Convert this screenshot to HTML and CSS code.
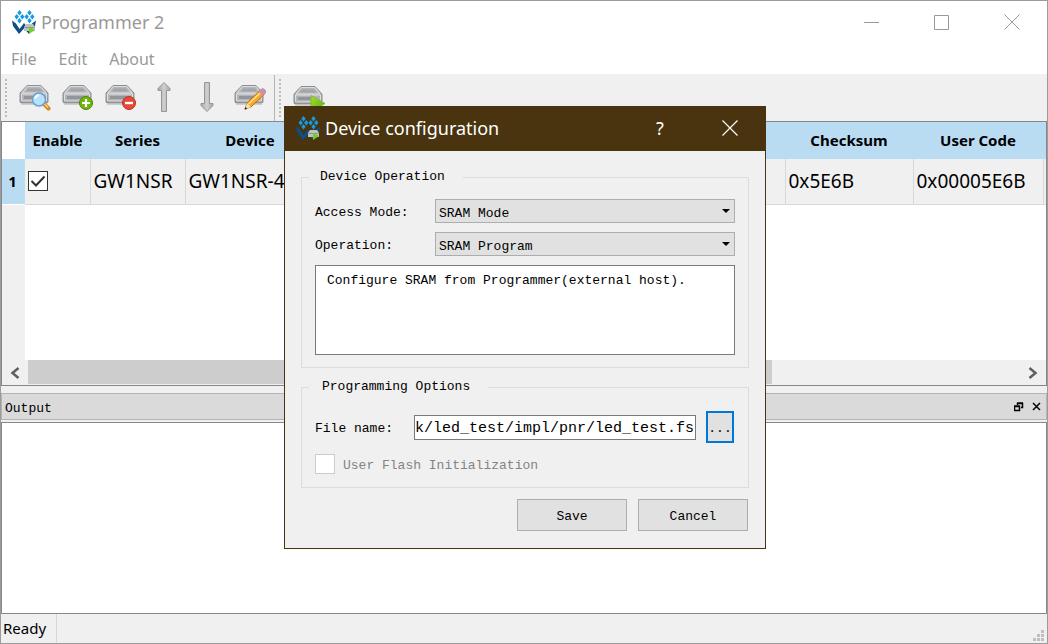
FILE: index.html
```html
<!DOCTYPE html>
<html lang="en">
<head>
<meta charset="utf-8">
<title>Programmer 2</title>
<link rel="stylesheet" href="styles.css">
</head>
<body>
<svg class="defs" aria-hidden="true">
  <defs>
    <linearGradient id="steel" x1="0" y1="0" x2="0" y2="1"><stop offset="0" stop-color="#d2d3d6"/><stop offset="1" stop-color="#8f9195"/></linearGradient>
    <linearGradient id="arrowFill" x1="0" y1="0" x2="1" y2="0"><stop offset="0" stop-color="#a2a2a2"/><stop offset=".5" stop-color="#d0d0d0"/><stop offset="1" stop-color="#a8a8a8"/></linearGradient>
    <linearGradient id="lime" x1="0" y1="0" x2="1" y2="1"><stop offset="0" stop-color="#a4e02c"/><stop offset="1" stop-color="#57ad12"/></linearGradient>
    <symbol id="drive" viewBox="0 0 32 28">
      <path d="M8 2.500h14l7 7.500v8.500q0 1.500-1.500 1.500H2.500q-1.500 0-1.500-1.500V10z" fill="url(#steel)" stroke="#8d8e91"/>
      <path d="M8.500 3.500h13l5.500 6.500H3z" fill="#b4b6b9" stroke="#dcddde"/>
      <path d="M9 5.500h12l2 3H7z" fill="#a3a5a9"/>
      <path d="M2.500 11h25v7h-25z" fill="#b2b4b8" stroke="#dedfe1"/>
      <path d="M5 13h17v3H5z" fill="#92959a"/>
      <path d="M2 21.500h26" stroke="#cfcfcf"/>
    </symbol>
    <symbol id="logo" viewBox="0 0 24 24">
      <path d="M0 10.500l4 3 3.500 5.500L12 13l4.500 6L20 13.500l4-3-1 5.500-6 8-5-5.500L7 24l-6-8z" fill="#0b4f86"/>
      <g fill="#159be6"><path d="M7.500 0l2.200 2.800-2.200 2.800-2.200-2.800zM4.700 4l2.200 2.800-2.200 2.800-2.200-2.800zM10.300 4l2.200 2.800-2.200 2.800-2.200-2.800zM7.500 8l2.200 2.800-2.200 2.800-2.200-2.800zM17.500 0l2.200 2.800-2.200 2.800-2.200-2.800zM14.700 4l2.200 2.800-2.200 2.800-2.200-2.800zM20.300 4l2.200 2.800-2.200 2.800-2.200-2.800zM17.500 8l2.200 2.800-2.200 2.800-2.200-2.800z"/></g>
      <path d="M14 14h7l2 3v4H12v-4z" fill="#bfc2c5"/><path d="M12.500 17.500h10" stroke="#8e9296"/>
      <path d="M17 16.500l6 3.500-6 4z" fill="#74cf25"/>
    </symbol>
    <symbol id="shaft" viewBox="0 0 14 32">
      <path d="M7 1.500l6 6v2H9.500v21h-5v-21H1v-2z" fill="url(#arrowFill)" stroke="#969696"/>
    </symbol>
  </defs>
</svg>

<main class="window">
  <header class="titlebar">
    <svg class="logo" aria-hidden="true"><use href="#logo"/></svg>
    <h1 class="title">Programmer 2</h1>
    <div class="controls">
      <button class="control" aria-label="Minimize"><svg viewBox="0 0 16 16"><path d="M0 8.500h15"/></svg></button>
      <button class="control" aria-label="Maximize"><svg viewBox="0 0 16 16"><path d="M.5 1.500h14v14h-14z"/></svg></button>
      <button class="control" aria-label="Close"><svg viewBox="0 0 16 16"><path d="M.5.5l15 15M15.500.5l-15 15"/></svg></button>
    </div>
  </header>

  <nav class="menubar">
    <button class="menu">File</button>
    <button class="menu">Edit</button>
    <button class="menu">About</button>
  </nav>

  <div class="toolbar" role="toolbar">
    <span class="grip"></span>
    <div class="tools">
      <button class="tool" aria-label="Scan device"><svg viewBox="0 0 32 28"><use href="#drive" width="32" height="28"/><path d="M25 21l4.500 4.500" stroke="#d58a20" stroke-width="4" stroke-linecap="round"/><path d="M25 20.500l4 4" stroke="#ffd080" stroke-width="1.500"/><circle cx="20" cy="16.500" r="6.500" fill="#b5e2fb" stroke="#6b9fce" stroke-width="1.500"/><path d="M16 15.500q1-3 4-3.500" fill="none" stroke="#fff" stroke-width="2"/></svg></button>
      <button class="tool" aria-label="Add device"><svg viewBox="0 0 32 28"><use href="#drive" width="32" height="28"/><circle cx="24" cy="20" r="6.500" fill="#70b50b" stroke="#4d8507"/><path d="M24 16v8M20 20h8" stroke="#fff" stroke-width="2.200"/></svg></button>
      <button class="tool" aria-label="Remove device"><svg viewBox="0 0 32 28"><use href="#drive" width="32" height="28"/><circle cx="24" cy="20" r="6.500" fill="#e5493a" stroke="#bb3026"/><path d="M20 20h8" stroke="#fff" stroke-width="2.400"/></svg></button>
      <button class="tool" aria-label="Move up"><svg class="arrow"><use href="#shaft"/></svg></button>
      <button class="tool" aria-label="Move down"><svg class="arrow down"><use href="#shaft"/></svg></button>
      <button class="tool" aria-label="Edit device"><svg viewBox="0 0 32 28"><use href="#drive" width="32" height="28"/><path d="M11 26l2-6L26 7.500l4 4L17 24z" fill="#f9a727" stroke="#bd6c12"/><path d="M14.500 21L27 9" stroke="#ffe29a" stroke-width="1.500"/><path d="M25 8.500l2.500-2.500q2-1 3.500 1t0 3.500L29 12.500z" fill="#d989b8" stroke="#a99"/><path d="M13 20l4 4-6 2.500z" fill="#f6deb4"/><path d="M10.500 26.800l1-2.800 1.800 1.700z" fill="#222"/></svg></button>
    </div>
    <span class="grip"></span>
    <button class="tool run" aria-label="Program"><svg viewBox="0 0 32 28"><use href="#drive" width="32" height="28"/><path d="M18 11.500l14 8-14 8z" fill="url(#lime)" stroke="#7fbf30"/></svg></button>
  </div>

  <section class="devices">
    <table class="grid">
      <colgroup><col class="c-num"><col class="c-enable"><col class="c-series"><col class="c-device"><col><col class="c-sum"><col class="c-code"><col class="c-end"></colgroup>
      <thead>
        <tr><td class="corner"></td><th>Enable</th><th>Series</th><th>Device</th><th></th><th>Checksum</th><th>User Code</th><th></th></tr>
      </thead>
      <tbody>
        <tr><th class="num">1</th><td><label class="enable"><input type="checkbox" checked aria-label="Enable device 1"><svg viewBox="0 0 20 20"><path d="M3.500 10l4.500 4.500 8.500-9"/></svg></label></td><td>GW1NSR</td><td>GW1NSR-4C</td><td></td><td>0x5E6B</td><td>0x00005E6B</td><td></td></tr>
      </tbody>
    </table>
    <div class="blank"></div>
    <div class="scrollbar">
      <button class="scroll" aria-label="Scroll left"><svg viewBox="0 0 10 12"><path d="M8.500 1l-6 5 6 5"/></svg></button>
      <div class="track"><div class="thumb"></div></div>
      <button class="scroll" aria-label="Scroll right"><svg viewBox="0 0 10 12"><path d="M1.500 1l6 5-6 5"/></svg></button>
    </div>
  </section>

  <header class="dock">
    <h2 class="dock-title">Output</h2>
    <button class="dock-button" aria-label="Float"><svg viewBox="0 0 10 10"><path d="M3.500 3V1.500h5v4H7M3 1h6M.5 4.500h5v4h-5zM0 4h6"/></svg></button>
    <button class="dock-button" aria-label="Close output"><svg viewBox="0 0 10 10"><path d="M1 1l7 7M8 1L1 8"/></svg></button>
  </header>
  <section class="output" aria-label="Output"></section>

  <footer class="status">
    <span class="ready">Ready</span>
    <svg class="sizegrip" viewBox="0 0 12 12"><path d="M8 0h3v3H8zM4 4h3v3H4zM8 4h3v3H8zM0 8h3v3H0zM4 8h3v3H4zM8 8h3v3H8z"/></svg>
  </footer>
</main>

<div class="dialog" role="dialog" aria-labelledby="dialog-title">
  <header class="dialog-bar">
    <svg class="logo" aria-hidden="true"><use href="#logo"/></svg>
    <h2 class="dialog-title" id="dialog-title">Device configuration</h2>
    <button class="dialog-control help" aria-label="Help">?</button>
    <button class="dialog-control" aria-label="Close dialog"><svg viewBox="0 0 16 16"><path d="M.5.5l15 15M15.500.5l-15 15"/></svg></button>
  </header>
  <form class="dialog-body">
    <fieldset class="group">
      <legend class="legend">Device Operation</legend>
      <div class="fields">
        <label class="label" for="mode">Access Mode:</label>
        <span class="combo"><select id="mode"><option>SRAM Mode</option></select><svg viewBox="0 0 8 4"><path d="M0 0h8L4 4z"/></svg></span>
        <label class="label" for="operation">Operation:</label>
        <span class="combo"><select id="operation"><option>SRAM Program</option></select><svg viewBox="0 0 8 4"><path d="M0 0h8L4 4z"/></svg></span>
        <textarea class="description" aria-label="Description" readonly>Configure SRAM from Programmer(external host).</textarea>
      </div>
    </fieldset>
    <fieldset class="group options">
      <legend class="legend">Programming Options</legend>
      <div class="file-row">
        <label class="label" for="file">File name:</label>
        <input class="file" id="file" type="text" value="k/led_test/impl/pnr/led_test.fs">
        <button class="browse" type="button">...</button>
      </div>
      <div class="flash"><input id="flash" type="checkbox" disabled><label class="label" for="flash">User Flash Initialization</label></div>
    </fieldset>
    <div class="actions">
      <button class="action" type="button">Save</button>
      <button class="action" type="button">Cancel</button>
    </div>
  </form>
</div>
</body>
</html>
```
FILE: styles.css
```css
* { box-sizing: border-box; }
body {
  margin: 0;
  font-family: "Noto Sans", "Open Sans", sans-serif;
  color: #000;
}
button, input, select, textarea { font: inherit; color: inherit; margin: 0; border-radius: 0; }
button { border: 0; padding: 0; background: none; }
h1, h2 { margin: 0; font-weight: 400; }
svg { display: block; flex: none; }
.defs { position: absolute; width: 0; height: 0; }

.window {
  display: grid;
  grid-template-rows: 44px 30px 46px minmax(0, 265fr) 34px 2px minmax(0, 192fr) 29px;
  height: 100vh;
  border: 1px solid #9b9b9b;
  background: #f0f0f0;
}

/* Title and menu */
.titlebar { display: flex; align-items: center; padding: 0 0 2px 11px; background: #fff; }
.logo { width: 24px; height: 24px; }
.title { margin-left: 5px; font-size: 18px; color: #999; }
.controls { display: flex; margin-left: auto; }
.control { display: grid; place-items: center; width: 70px; height: 42px; }
.control svg { width: 16px; height: 16px; fill: none; stroke: #999; }
.menubar { display: flex; gap: 22px; align-items: center; padding: 0 0 1px 10px; background: #fff; border-bottom: 1px solid #f0f0f0; }
.menu { font-size: 16px; color: #999; }

/* Toolbar */
.toolbar { display: flex; align-items: center; }
.grip {
  width: 2px;
  height: 38px;
  margin-left: 4px;
  background: repeating-linear-gradient(#bbb 0 2px, transparent 2px 4px);
}
.tools { display: flex; gap: 11px; height: 46px; align-items: center; padding: 0 8px 2px 12px; border-right: 1px solid #b4b4b4; }
.tool { display: grid; place-items: center; width: 32px; height: 32px; }
.tool svg { width: 32px; height: 28px; }
.tool .arrow { width: 14px; height: 32px; }
.down { transform: rotate(180deg); }
.run { margin-left: 12px; }

/* Device table */
.devices { display: flex; flex-direction: column; border: 1px solid #828790; background: #fff; }
.grid { width: 100%; table-layout: fixed; border-collapse: collapse; font-size: 19px; }
.c-num { width: 23px; }
.c-enable { width: 65px; }
.c-series { width: 95px; }
.c-device { width: 130px; }
.c-sum { width: 128px; }
.c-code { width: 130px; }
.c-end { width: 3px; }
.grid th { height: 37px; padding: 0 0 2px; background: #badcf3; font-size: 15px; font-weight: 700; }
.grid .corner { background: #fff; border: 0; }
.grid .num { padding-right: 2px; }
.grid tbody td { height: 45px; padding: 0 3px; background: #f0f0f0; border-right: 1px solid #d8d8d8; border-bottom: 1px solid #d8d8d8; white-space: nowrap; overflow: hidden; }
.grid tbody td:last-child { border-right: 0; }
.enable { display: grid; width: 20px; height: 20px; }
.enable input, .enable svg { grid-area: 1 / 1; width: 20px; height: 20px; }
.enable input { appearance: none; border: 1px solid #333; background: #fff; }
.enable svg { fill: none; stroke: #333; stroke-width: 2; pointer-events: none; z-index: 1; }
.blank { flex: 1; border-left: 23px solid #f0f0f0; }
.scrollbar { display: flex; height: 25px; background: #f0f0f0; }
.scroll { display: grid; place-items: center; width: 26px; }
.scroll svg { width: 10px; height: 12px; fill: none; stroke: #606060; stroke-width: 2.500; }
.track { flex: 1; padding-bottom: 1px; }
.thumb { width: 75%; height: 100%; background: #cdcdcd; }

/* Output dock */
.dock {
  display: flex;
  align-items: center;
  gap: 8px;
  margin-top: 7px;
  padding: 0 4px 0 3px;
  border: 1px solid #b4b4b4;
  background: #dadada;
}
.dock-title { flex: 1; padding-top: 4px; font: 13px/20px "Liberation Mono", monospace; }
.dock-button svg { width: 10px; height: 10px; fill: none; stroke: #000; stroke-width: 1.500; }
.output { grid-row: 7; border: 1px solid #828790; background: #fff; }
.status { grid-row: 8; display: flex; font-size: 15px; line-height: 29px; }
.ready { padding: 0 10px 0 2px; border-right: 1px solid #d8d8d8; }
.sizegrip { width: 12px; height: 12px; margin: auto 2px 1px auto; fill: #bfbfbf; }

/* Device configuration dialog */
.dialog {
  position: absolute;
  top: 106px;
  left: 284px;
  width: 482px;
  border: 1px solid #49340f;
  background: #f0f0f0;
  font: 13px/20px "Liberation Mono", monospace;
}
.dialog-bar { display: flex; align-items: center; height: 44px; padding: 0 0 2px 11px; background: #49340f; color: #fff; font-family: "Noto Sans", sans-serif; }
.dialog-title { flex: 1; margin-left: 5px; font-size: 18px; }
.dialog-control { display: grid; place-items: center; width: 70px; height: 42px; }
.dialog-control svg { width: 16px; height: 16px; fill: none; stroke: #fff; stroke-width: 1.200; }
.help { font-size: 18px; }
.dialog-body { padding: 16px 16px 17px; }
.group { min-width: 0; margin: 0; padding: 12px 13px; border: 1px solid #dcdcdc; }
.legend { margin-left: -6px; padding: 0 18px 0 11px; }
.label { padding-top: 4px; }
.fields { display: grid; grid-template-columns: 120px 1fr; gap: 9px 0; align-items: center; line-height: 20px; }
.combo { display: grid; align-items: center; justify-items: end; }
.combo select, .combo svg { grid-area: 1 / 1; }
.combo select { appearance: none; width: 100%; height: 24px; padding: 4px 3px 0; border: 1px solid #adadad; background: #e1e1e1; }
.combo svg { width: 8px; height: 4px; margin-right: 5px; pointer-events: none; z-index: 1; }
.description { grid-column: 1 / 3; display: block; width: 100%; height: 90px; padding: 5px 11px; border: 1px solid #7a7a7a; background: #fff; resize: none; outline: 0; }
.options { margin-top: 9px; padding: 14px 14px 13px 13px; }
.options .legend { padding-left: 13px; }
.file-row { display: grid; grid-template-columns: 99px minmax(0, 1fr) 28px; align-items: center; }
.file { width: auto; min-width: 0; height: 25px; margin-right: 10px; padding: 2px 0 0; border: 1px solid #7a7a7a; background: #fff; font-size: 15px; }
.browse { height: 32px; padding-top: 4px; border: 2px solid #0078d7; background: #e1e1e1; }
.flash { display: flex; align-items: center; gap: 8px; height: 20px; margin-top: 11px; color: #838383; }
.flash input { appearance: none; width: 20px; height: 20px; border: 1px solid #ccc; background: #fff; }
.actions { display: flex; justify-content: flex-end; gap: 11px; margin: 11px 1px 0 0; }
.action { width: 110px; height: 32px; padding-top: 4px; border: 1px solid #adadad; background: #e1e1e1; }
```
